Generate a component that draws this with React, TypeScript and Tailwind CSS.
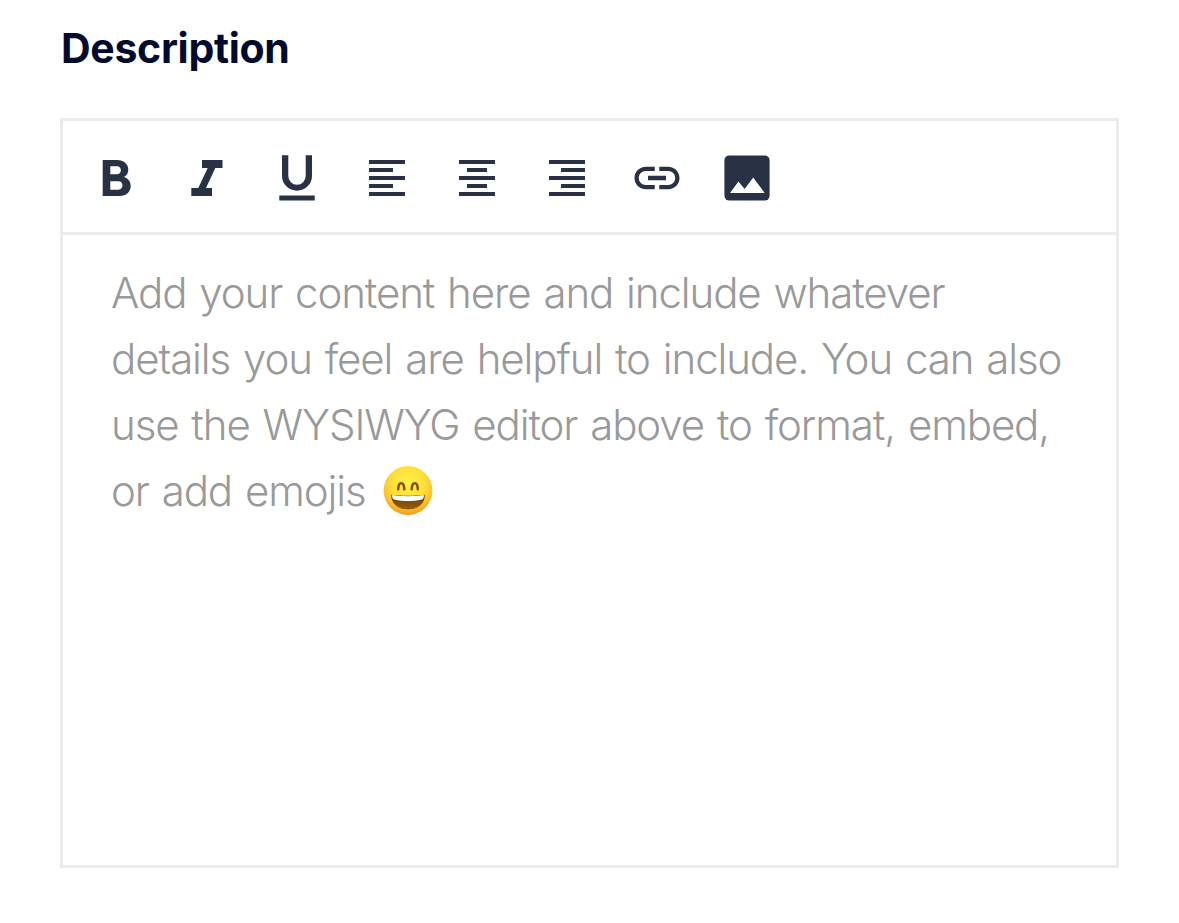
import type { ReactNode } from 'react';

function Tool({ label, children }: { label: string; children: ReactNode }) {
  return (
    <button type="button" aria-label={label} className="size-[60px] shrink-0 text-[#293145]">
      <svg viewBox="0 0 60 60" className="block size-[60px]" fill="currentColor">
        {children}
      </svg>
    </button>
  );
}

function Smile() {
  return (
    <svg viewBox="0 0 50 50" className="ml-[17px] size-[50px] shrink-0" role="img" aria-label="Grinning face">
      <defs>
        <radialGradient id="face" cx="50%" cy="36%" r="66%">
          <stop offset="0" stopColor="#fff04a" />
          <stop offset=".5" stopColor="#ffe03a" />
          <stop offset=".78" stopColor="#fdc22c" />
          <stop offset="1" stopColor="#ef9118" />
        </radialGradient>
        <linearGradient id="mouth" x1="0" y1="0" x2="0" y2="1">
          <stop offset="0" stopColor="#6b3a05" />
          <stop offset="1" stopColor="#96600c" />
        </linearGradient>
      </defs>
      <circle cx="25" cy="24.5" r="24.4" fill="url(#face)" />
      <g fill="none" stroke="#8a4f08" strokeWidth="2.5" strokeLinecap="round">
        <path d="M15.2 23.2C15.4 15.3 21 15.3 21.3 23.2" />
        <path d="M28.7 23.2C29 15.3 34.6 15.3 34.8 23.2" />
      </g>
      <path d="M8.2 28.7C18 30.2 32 30.2 41.8 28.7C42.1 38 34.8 43.4 25 43.4S7.9 38 8.2 28.7Z" fill="url(#mouth)" />
      <path d="M9.2 29C19 30.6 31 30.6 40.8 29C41 31.4 40.4 33 38.6 33.5C30 35.6 20 35.6 11.4 33.5C9.6 33 9 31.4 9.2 29Z" fill="#fff" />
    </svg>
  );
}

export default function App() {
  return (
    <main className="h-[923px] w-full bg-white px-[60px] pt-[18px] font-['Inter',sans-serif]">
      <h1 className="mb-[40px] h-[60px] pl-px text-[41px] leading-[61px] font-bold tracking-[-0.3px] text-[#020b2d]">
        Description
      </h1>
      <section className="flex h-[750px] flex-col border-[3px] border-[#ebebeb]">
        <div className="flex h-[114px] shrink-0 gap-[30px] border-b-[3px] border-[#ebebeb] pt-[27px] pl-[24px]">
          <Tool label="Bold">
            <path
              fillRule="evenodd"
              d="M15.7 12H30C36.7 12 41.3 16 41.3 21.7C41.3 25 39.6 27.7 36.9 29.1C41 30.5 43.7 33.6 43.7 37.7C43.7 44 39.2 48 32.7 48H15.7ZM23.3 18.3V26.3H30C35.2 26.3 35.2 18.3 30 18.3ZM23.3 33.3V41.7H31.5C36.8 41.7 36.8 33.3 31.5 33.3Z"
            />
          </Tool>
          <Tool label="Italic">
            <path d="M25 12H45.5V20H38.3L29 40H35V48H14.3V40H21.3L30.7 20H25Z" />
          </Tool>
          <Tool label="Underline">
            <path d="M15 7.3H21.3V28A8.7 8.7 0 0 0 38.7 28V7.3H45V27.7A15 15 0 0 1 15 27.7ZM12.3 47.6H47.7V52.6H12.3Z" />
          </Tool>
          <Tool label="Align left">
            <path d="M12 12h36v4H12zM12 20h24v4H12zM12 28h36v4H12zM12 36h24v4H12zM12 44h36v4H12z" />
          </Tool>
          <Tool label="Align center">
            <path d="M12 12h36v4H12zM20 20h20v4H20zM12 28h36v4H12zM20 36h20v4H20zM12 44h36v4H12z" />
          </Tool>
          <Tool label="Align right">
            <path d="M12 12h36v4H12zM24 20h24v4H24zM12 28h36v4H12zM24 36h24v4H24zM12 44h36v4H12z" />
          </Tool>
          <Tool label="Insert link">
            <path
              transform="translate(3 3) scale(2.25)"
              d="M3.9 12c0-1.71 1.39-3.1 3.1-3.1h4V7H7c-2.76 0-5 2.24-5 5s2.24 5 5 5h4v-1.9H7c-1.71 0-3.1-1.39-3.1-3.1zM8 13h8v-2H8v2zm9-6h-4v1.9h4c1.71 0 3.1 1.39 3.1 3.1s-1.39 3.1-3.1 3.1h-4V17h4c2.76 0 5-2.24 5-5s-2.24-5-5-5z"
            />
          </Tool>
          <Tool label="Insert image">
            <rect x="7.4" y="7.4" width="45.2" height="45.2" rx="5" />
            <path fill="#fff" d="M13 45L21.5 33.6L27.6 41L36.2 29.6L47.7 45Z" />
          </Tool>
        </div>
        <div className="flex flex-col pt-[25px] pl-[48px] text-[42px] leading-[66px] font-light tracking-[-1.1px] whitespace-nowrap text-[#999] [word-spacing:2.2px]">
          <div>Add your content here and include whatever</div>
          <div>details you feel are helpful to include. You can also</div>
          <div>use the WYSIWYG editor above to format, embed,</div>
          <div className="flex items-center">
            or add emojis
            <Smile />
          </div>
        </div>
      </section>
    </main>
  );
}
